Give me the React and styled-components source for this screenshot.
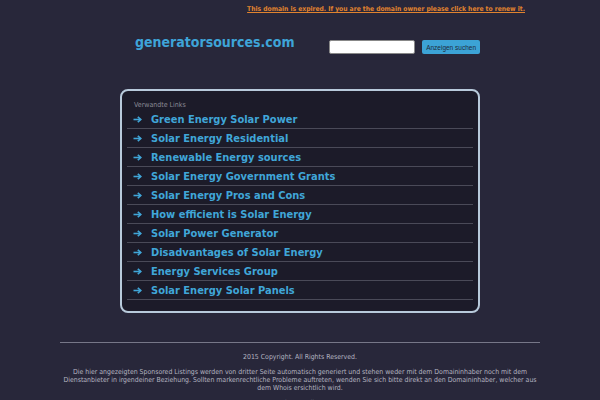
import React from "react";
import styled, { createGlobalStyle } from "styled-components";

const GlobalStyle = createGlobalStyle`
  html, body {
    margin: 0;
    padding: 0;
    background: #28273a;
    font-family: "DejaVu Sans Condensed", "DejaVu Sans", sans-serif;
  }
`;

const links = [
  "Green Energy Solar Power",
  "Solar Energy Residential",
  "Renewable Energy sources",
  "Solar Energy Government Grants",
  "Solar Energy Pros and Cons",
  "How efficient is Solar Energy",
  "Solar Power Generator",
  "Disadvantages of Solar Energy",
  "Energy Services Group",
  "Solar Energy Solar Panels",
];

const ArrowIcon = () => (
  <svg width="9" height="7" viewBox="0 0 9 7">
    <path d="M0.5 3.5 H7.5" stroke="#40a6d8" strokeWidth="1.6" fill="none" />
    <path d="M4.8 0.8 L7.8 3.5 L4.8 6.2" stroke="#40a6d8" strokeWidth="1.6" fill="none" strokeLinejoin="miter" />
  </svg>
);

const App = () => {
  return (
    <>
      <GlobalStyle />
      <Page>
        <Notice>
          <a href="#">This domain is expired. If you are the domain owner please click here to renew it.</a>
        </Notice>
        <Header>
          <Logo>generatorsources.com</Logo>
          <SearchForm>
            <SearchInput type="text" />
            <SearchButton>Anzeigen suchen</SearchButton>
          </SearchForm>
        </Header>
        <LinkBox>
          <BoxTitle>Verwandte Links</BoxTitle>
          <LinkList>
            {links.map((l) => (
              <LinkRow key={l}>
                <Arrow>
                  <ArrowIcon />
                </Arrow>
                <a href="#">{l}</a>
              </LinkRow>
            ))}
          </LinkList>
        </LinkBox>
        <Footer>
          <p>2015 Copyright. All Rights Reserved.</p>
          <p>
            Die hier angezeigten Sponsored Listings werden von dritter Seite automatisch generiert und stehen weder mit dem Domaininhaber noch mit dem Dienstanbieter in irgendeiner Beziehung. Sollten markenrechtliche Probleme auftreten, wenden Sie sich bitte direkt an den Domaininhaber, welcher aus dem Whois ersichtlich wird.
          </p>
          <p>Privacy Policy</p>
        </Footer>
      </Page>
    </>
  );
};

const Page = styled.div`
  width: 600px;
  height: 400px;
  overflow: hidden;
`;

const Notice = styled.div`
  height: 18px;
  padding-right: 75px;
  text-align: right;
  font-size: 6.7px;
  font-weight: bold;
  line-height: 19px;

  a {
    color: #e0832f;
    text-decoration: underline;
  }
`;

const Header = styled.div`
  display: flex;
  align-items: center;
  width: 345px;
  margin: 0 auto;
  padding: 12px 0 0 15px;
  height: 34px;
  box-sizing: content-box;
`;

const Logo = styled.div`
  color: #3ea4d8;
  font-size: 14px;
  font-weight: bold;
  margin-top: -10px;
  flex: 1;
`;

const SearchForm = styled.div`
  display: flex;
  align-items: center;
  gap: 7px;
`;

const SearchInput = styled.input`
  width: 84px;
  height: 12px;
  padding: 0;
  border: 1px solid #888;
  border-radius: 2px;
  background: #fff;
`;

const SearchButton = styled.button`
  height: 14px;
  padding: 0 4px;
  border: none;
  border-radius: 2px;
  background: #3ca3d6;
  color: #1e2a3a;
  font-family: "Liberation Sans", sans-serif;
  font-size: 6.5px;
`;

const LinkBox = styled.div`
  width: 360px;
  margin: 25px auto 0;
  border: 2px solid #b8cadb;
  border-radius: 8px;
  background: #1c1b29;
  padding: 10px 5px 11px 5px;
  box-sizing: border-box;
`;

const BoxTitle = styled.div`
  font-size: 7px;
  color: #8a8a96;
  padding-left: 7px;
  margin-bottom: 1px;
`;

const LinkList = styled.div`
  display: flex;
  flex-direction: column;
`;

const LinkRow = styled.div`
  display: flex;
  align-items: center;
  height: 18px;
  border-bottom: 1px solid #4a4a58;
  padding-left: 6px;

  a {
    color: #40a6d8;
    font-size: 11px;
    font-weight: bold;
    text-decoration: none;
  }
`;

const Arrow = styled.span`
  display: flex;
  align-items: center;
  width: 18px;
  padding-top: 1px;
`;

const Footer = styled.div`
  width: 480px;
  margin: 29px auto 0;
  border-top: 1px solid #777788;
  text-align: center;
  color: #b4b4c0;
  font-size: 6.9px;
  line-height: 8px;

  p {
    margin: 7px 0 0;
  }
  p:first-child {
    margin-top: 10px;
  }
`;

export default App;
